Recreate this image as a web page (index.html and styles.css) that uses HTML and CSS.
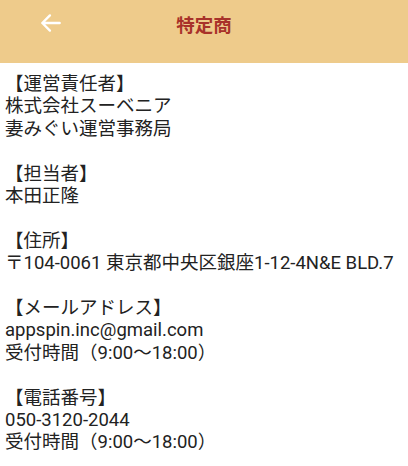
FILE: index.html
```html
<!DOCTYPE html>
<html lang="ja">
<head>
    <meta charset="UTF-8">
    <meta name="viewport" content="width=device-width, initial-scale=1.0">
    <title>特定商</title>
    <link rel="stylesheet" href="styles.css">
</head>
<body>
    <header class="app-bar">
        <a class="back" href="#">
            <svg width="26" height="26" viewBox="0 0 24 24"><path d="M20 12H4M11 5l-7 7 7 7" fill="none" stroke="#fff" stroke-width="2.2" stroke-linecap="round" stroke-linejoin="round"/></svg>
        </a>
        <h1 class="title">特定商</h1>
    </header>

    <main class="content">
        <section class="block">
            <div>【運営責任者】</div>
            <div>株式会社スーベニア</div>
            <div>妻みぐい運営事務局</div>
        </section>
        <section class="block">
            <div>【担当者】</div>
            <div>本田正隆</div>
        </section>
        <section class="block">
            <div>【住所】</div>
            <div class="nowrap">〒104-0061 東京都中央区銀座1-12-4N&amp;E BLD.7</div>
        </section>
        <section class="block">
            <div>【メールアドレス】</div>
            <div>appspin.inc@gmail.com</div>
            <div>受付時間（9:00〜18:00）</div>
        </section>
        <section class="block">
            <div>【電話番号】</div>
            <div>050-3120-2044</div>
            <div>受付時間（9:00〜18:00）</div>
        </section>
    </main>
</body>
</html>
```

FILE: styles.css
```css
body {
    margin: 0;
    font-family: Roboto, "Noto Sans CJK JP", sans-serif;
    background: #fff;
    color: #222;
}
.app-bar {
    position: relative;
    height: 63px;
    background: #eecb8b;
    display: flex;
    align-items: center;
    justify-content: center;
}
.back {
    position: absolute;
    left: 38px;
    top: 10px;
    display: flex;
}
.title {
    margin: 0 0 16px;
    font-size: 18.5px;
    font-weight: bold;
    color: #a8322a;
}
.content {
    padding: 10px 5px;
    font-size: 18.5px;
    line-height: 22.4px;
}
.block {
    margin-bottom: 22.4px;
}
.nowrap {
    white-space: nowrap;
}
```
